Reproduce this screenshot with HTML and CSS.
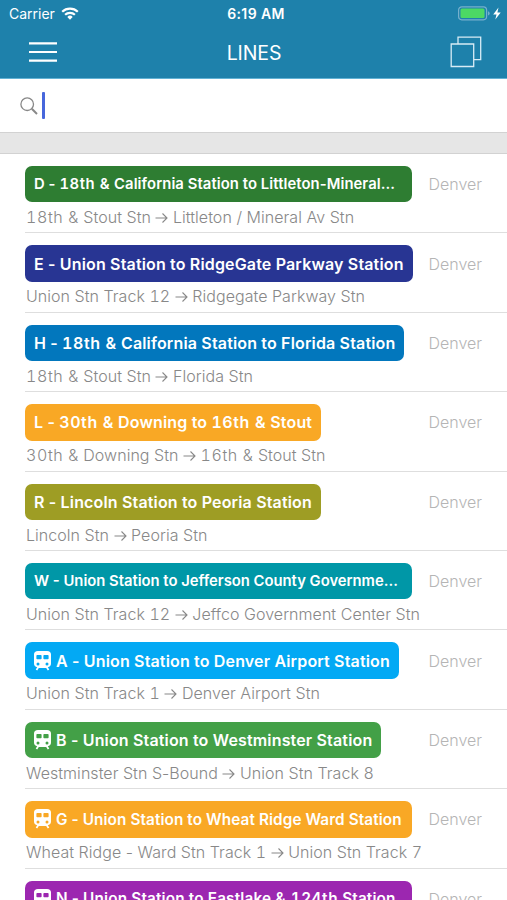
FILE: index.html
```html
<!DOCTYPE html>
<html lang="en">
<head>
    <meta charset="UTF-8">
    <meta name="viewport" content="width=device-width, initial-scale=1.0">
    <title>Lines</title>
    <link rel="stylesheet" href="styles.css">
</head>
<body>
    <!-- Symbols -->
    <svg class="symbols" width="0" height="0">
        <symbol id="train" viewBox="0 0 17 20">
            <path fill="currentColor" fill-rule="evenodd" d="M4 0h9c2.600 0 4 1.400 4 3.600v9c0 2-1.300 3.400-3.200 3.700l1.500 2.200-1.500 1-1.600-2.500H4.800l-1.600 2.500-1.500-1 1.500-2.200C1.300 16 0 14.600 0 12.600v-9C0 1.400 1.400 0 4 0zM3.200 4q-.8 0-.8.800v2.600q0 .8.800.8h3.600q.8 0 .8-.8V4.800q0-.8-.8-.8zM10.200 4q-.8 0-.8.800v2.600q0 .8.800.8h3.600q.8 0 .8-.8V4.800q0-.8-.8-.8zM4 11.500a1.500 1.500 0 1 0 0 3 1.500 1.500 0 0 0 0-3zM13 11.500a1.500 1.500 0 1 0 0 3 1.500 1.500 0 0 0 0-3z"/>
        </symbol>
        <symbol id="arrow" viewBox="0 0 13 12">
            <path fill="none" stroke="currentColor" stroke-width="1.100" d="M.5 6h11.500M7.500 1.500L12 6l-4.500 4.500"/>
        </symbol>
    </svg>

    <header class="header">
        <div class="status-bar">
            <div class="carrier">
                <span>Carrier</span>
                <svg width="18" height="13" viewBox="0 0 18 13">
                    <g fill="none" stroke="#fff" stroke-width="2.200">
                        <path d="M1.200 4.700a11.200 11.200 0 0 1 15.600 0"/>
                        <path d="M4.100 7.800a7 7 0 0 1 9.800 0"/>
                    </g>
                    <path fill="#fff" d="M6.300 9.900a3.900 3.900 0 0 1 5.400 0L9 12.700z"/>
                </svg>
            </div>
            <div class="time">6:19 AM</div>
            <div class="power">
                <svg width="44" height="15" viewBox="0 0 44 15">
                    <rect x=".6" y=".8" width="28" height="13" rx="3.200" fill="none" stroke="#76b0cd" stroke-width="1.200"/>
                    <rect x="2.500" y="2.600" width="24" height="9.400" rx="1.500" fill="#4cd964"/>
                    <path d="M30 5.200q1.700.6 1.700 2.200T30 9.600z" fill="#76b0cd"/>
                    <path d="M40.500 1.500L35.200 8.400h3.300l-1.200 5.100 5.400-7h-3.300z" fill="#fff"/>
                </svg>
            </div>
        </div>
        <div class="nav-bar">
            <svg width="28" height="22" viewBox="0 0 28 22">
                <path stroke="#fff" stroke-width="2.200" d="M0 2.300h28M0 11h28M0 19.700h28"/>
            </svg>
            <h1>LINES</h1>
            <svg width="32" height="32" viewBox="0 0 32 32">
                <path fill="none" stroke="#d8ecf5" stroke-width="1.300" d="M1.200 8h22.500v22.500H1.200zM8 8V1.200h22.700v22.500h-7"/>
            </svg>
        </div>
    </header>

    <div class="search">
        <svg width="18" height="18" viewBox="0 0 18 18">
            <circle cx="7.200" cy="7.200" r="6.300" fill="none" stroke="#888" stroke-width="1.300"/>
            <path stroke="#888" stroke-width="2" d="M11.800 11.800l5.200 5.200"/>
        </svg>
        <span class="caret"></span>
    </div>
    <div class="divider"></div>

    <ul class="lines">
        <li class="line">
            <div class="main">
                <div class="badge green small wide"><span>D - <span class="street">18th &amp;</span> California Station to Littleton-Mineral...</span></div>
                <span class="city">Denver</span>
            </div>
            <div class="route"><span class="street">18th &amp;</span> Stout Stn <svg><use href="#arrow"/></svg> Littleton / Mineral Av Stn</div>
        </li>
        <li class="line">
            <div class="main">
                <div class="badge navy">E - Union Station to RidgeGate Parkway Station</div>
                <span class="city">Denver</span>
            </div>
            <div class="route">Union Stn Track <span class="num">12</span> <svg><use href="#arrow"/></svg> Ridgegate Parkway Stn</div>
        </li>
        <li class="line">
            <div class="main">
                <div class="badge blue"><span>H - <span class="street">18th &amp;</span> California Station to Florida Station</span></div>
                <span class="city">Denver</span>
            </div>
            <div class="route"><span class="street">18th &amp;</span> Stout Stn <svg><use href="#arrow"/></svg> Florida Stn</div>
        </li>
        <li class="line">
            <div class="main">
                <div class="badge orange"><span>L - <span class="street">30th &amp;</span> Downing to <span class="street">16th &amp;</span> Stout</span></div>
                <span class="city">Denver</span>
            </div>
            <div class="route"><span class="street">30th &amp;</span> Downing Stn <svg><use href="#arrow"/></svg> <span class="street">16th &amp;</span> Stout Stn</div>
        </li>
        <li class="line">
            <div class="main">
                <div class="badge olive">R - Lincoln Station to Peoria Station</div>
                <span class="city">Denver</span>
            </div>
            <div class="route">Lincoln Stn <svg><use href="#arrow"/></svg> Peoria Stn</div>
        </li>
        <li class="line">
            <div class="main">
                <div class="badge teal small">W - Union Station to Jefferson County Governme...</div>
                <span class="city">Denver</span>
            </div>
            <div class="route">Union Stn Track <span class="num">12</span> <svg><use href="#arrow"/></svg> Jeffco Government Center Stn</div>
        </li>
        <li class="line">
            <div class="main">
                <div class="badge sky"><svg><use href="#train"/></svg>A - Union Station to Denver Airport Station</div>
                <span class="city">Denver</span>
            </div>
            <div class="route">Union Stn Track <span class="num">1</span> <svg><use href="#arrow"/></svg> Denver Airport Stn</div>
        </li>
        <li class="line">
            <div class="main">
                <div class="badge light-green"><svg><use href="#train"/></svg>B - Union Station to Westminster Station</div>
                <span class="city">Denver</span>
            </div>
            <div class="route">Westminster Stn S-Bound <svg><use href="#arrow"/></svg> Union Stn Track <span class="num">8</span></div>
        </li>
        <li class="line">
            <div class="main">
                <div class="badge orange medium"><svg><use href="#train"/></svg>G - Union Station to Wheat Ridge Ward Station</div>
                <span class="city">Denver</span>
            </div>
            <div class="route">Wheat Ridge - Ward Stn Track <span class="num">1</span> <svg><use href="#arrow"/></svg> Union Stn Track <span class="num">7</span></div>
        </li>
        <li class="line">
            <div class="main">
                <div class="badge purple medium wide"><svg><use href="#train"/></svg><span>N - Union Station to Eastlake <span class="street">&amp; 124th</span> Station</span></div>
                <span class="city">Denver</span>
            </div>
        </li>
    </ul>
</body>
</html>
```

FILE: styles.css
```css
* {
    box-sizing: border-box;
}

body {
    margin: 0;
    height: 900px;
    overflow: hidden;
    background: #fff;
    font-family: Inter, "Liberation Sans", sans-serif;
}

.symbols {
    position: absolute;
}

/* Header */
.header {
    height: 79px;
    background: #1e81ab;
    border-bottom: 1px solid #62b2d5;
    color: #fff;
}

.status-bar {
    display: grid;
    grid-template-columns: 1fr auto 1fr;
    align-items: center;
    height: 27px;
    padding: 0 5px 0 9px;
    font-size: 14px;
}

.carrier {
    display: flex;
    align-items: center;
    gap: 6px;
}

.time {
    padding-left: 1px;
    font-weight: 600;
    letter-spacing: 0.4px;
}

.power {
    display: flex;
    justify-content: flex-end;
}

.nav-bar {
    display: grid;
    grid-template-columns: 1fr auto 1fr;
    align-items: center;
    height: 51px;
    padding: 0 25px 2px 29px;
}

.nav-bar h1 {
    margin: 0 3px 0 0;
    padding-top: 3px;
    font-size: 19.500px;
    font-weight: 400;
    letter-spacing: -0.1px;
}

.nav-bar svg:last-child {
    justify-self: end;
}

/* Search */
.search {
    display: flex;
    align-items: center;
    gap: 4px;
    height: 53px;
    padding: 0 20px;
}

.caret {
    width: 3px;
    height: 27px;
    border-radius: 1px;
    background: #4767dc;
}

.divider {
    height: 22px;
    background: #e6e6e6;
    border-top: 1px solid #d2d2d2;
    border-bottom: 1px solid #d2d2d2;
}

/* Lines */
.lines {
    margin: 0;
    padding: 0 0 0 25px;
    list-style: none;
}

.line {
    height: 79.4px;
    padding-top: 12px;
    border-bottom: 1px solid #dedede;
}

.main {
    display: flex;
    align-items: center;
    justify-content: space-between;
    padding-right: 25px;
}

.badge {
    display: flex;
    align-items: center;
    height: 36.400px;
    padding: 0 9px;
    border-radius: 7px;
    color: #fff;
    font-size: 16px;
    font-weight: 600;
    letter-spacing: 0.16px;
    white-space: nowrap;
}

.badge.medium {
    width: 387px;
    font-size: 15.300px;
    letter-spacing: 0.1px;
}

.badge.small {
    width: 387px;
    font-size: 14.800px;
    letter-spacing: 0;
}

.badge.small.wide {
    letter-spacing: 0.09px;
}

.badge.medium.wide {
    letter-spacing: 0.17px;
}

.badge svg {
    flex: none;
    width: 17px;
    height: 20px;
    margin-right: 5px;
}

.num {
    font-variant-numeric: tabular-nums;
}

.street {
    font-variant-numeric: tabular-nums;
    letter-spacing: 0.6px;
}

.green { background: #2e7d32; }
.navy { background: #283593; }
.blue { background: #0277bd; }
.orange { background: #f9a825; }
.olive { background: #9e9d24; }
.teal { background: #0097a7; }
.sky { background: #03a9f4; }
.light-green { background: #43a047; }
.purple { background: #9c27b0; }

.city {
    color: #b5b5b5;
    font-size: 16px;
    font-weight: 300;
}

.route {
    margin-top: 4.600px;
    padding-left: 1px;
    color: #888;
    font-size: 16px;
    font-weight: 300;
    letter-spacing: 0.04px;
    line-height: 20px;
    white-space: nowrap;
}

.route svg {
    width: 13px;
    height: 12px;
    vertical-align: -1px;
}
```
